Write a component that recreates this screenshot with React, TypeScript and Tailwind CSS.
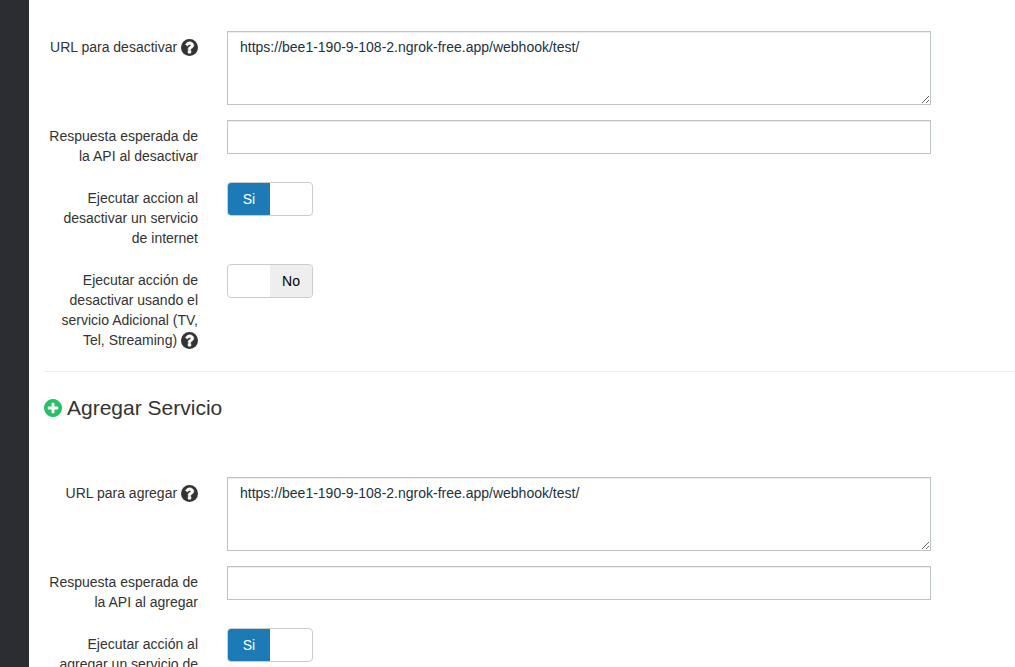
import { useState } from "react";
import type { ReactNode } from "react";

const HelpIcon = () => (
  <svg
    viewBox="128 128 1536 1536"
    className="inline-block size-[17px] align-[-4px]"
    aria-hidden="true"
  >
    <circle cx="896" cy="896" r="768" fill="currentColor" />
    <path
      fill="#fff"
      stroke="#fff"
      strokeWidth="50"
      strokeLinejoin="round"
      d="M1024 1376v-192q0-14-9-23t-23-9h-192q-14 0-23 9t-9 23v192q0 14 9 23t23 9h192q14 0 23-9t9-23zm256-672q0-88-55.5-163t-138.5-116-170-41q-243 0-371 213-15 24 8 42l132 100q7 6 19 6 16 0 25-12 53-68 86-92 34-24 86-24 48 0 85.5 26t37.5 59q0 38-20 61t-68 45q-63 28-115.5 86.5t-52.5 125.5v36q0 14 9 23t23 9h192q14 0 23-9t9-23q0-19 21.5-49.5t54.5-49.5q32-18 49-28.5t46-35 44.5-48 28-60.5 12.5-81z"
    />
  </svg>
);

const PlusIcon = () => (
  <svg
    viewBox="128 128 1536 1536"
    className="size-[18px] shrink-0 fill-[#26c165]"
    aria-hidden="true"
  >
    <path d="M1344 960v-128q0-26-19-45t-45-19h-256v-256q0-26-19-45t-45-19h-128q-26 0-45 19t-19 45v256h-256q-26 0-45 19t-19 45v128q0 26 19 45t45 19h256v256q0 26 19 45t45 19h128q26 0 45-19t19-45v-256h256q26 0 45-19t19-45zm320-64q0 209-103 385.5t-279.5 279.5-385.5 103-385.5-103-279.5-279.5-103-385.5 103-385.5 279.5-279.5 385.5-103 385.5 103 279.5 279.5 103 385.5z" />
  </svg>
);

interface FormRowProps {
  id: string;
  label: string;
  help?: boolean;
  children: ReactNode;
}

const FormRow = ({ id, label, help, children }: FormRowProps) => (
  <div className="flex items-start">
    <label htmlFor={id} className="w-[184px] shrink-0 px-[15px] pt-1.5 pb-px text-right">
      {label}
      {help && (
        <>
          {" "}
          <HelpIcon />
        </>
      )}
    </label>
    <div className="flex min-w-0 flex-1 pl-3.5 pr-[84px]">{children}</div>
  </div>
);

const UrlField = ({ id, value }: { id: string; value: string }) => (
  <textarea
    id={id}
    defaultValue={value}
    rows={3}
    className="h-[74px] w-full resize border border-[#bdc4c4] bg-white px-3 py-[5px] text-[#22313f] shadow-[inset_0_1px_1px_#00000013] outline-none"
  />
);

const TextField = ({ id }: { id: string }) => (
  <input
    id={id}
    type="text"
    className="h-[34px] w-full border border-[#bdc4c4] bg-white px-3 py-[5px] text-[#22313f] shadow-[inset_0_1px_1px_#00000013] outline-none"
  />
);

const Toggle = ({ id, initial }: { id: string; initial: boolean }) => {
  const [on, setOn] = useState<boolean>(initial);

  return (
    <label className="flex h-[34px] w-[86px] cursor-pointer overflow-hidden rounded border border-[#ccc] bg-white text-center leading-8">
      <input
        id={id}
        type="checkbox"
        checked={on}
        onChange={(e) => setOn(e.target.checked)}
        className="sr-only"
      />
      <span className={on ? "flex-1 bg-[#1c7ab6] text-white" : "flex-1"}>{on ? "Si" : ""}</span>
      <span className={on ? "flex-1" : "flex-1 bg-[#eee] text-black"}>{on ? "" : "No"}</span>
    </label>
  );
};

const WEBHOOK_URL = "https://bee1-190-9-108-2.ngrok-free.app/webhook/test/";

export default function App() {
  return (
    <div className="flex h-screen overflow-hidden bg-white font-['Liberation_Sans',Arial,sans-serif] text-[14px] leading-5 text-[#333]">
      <aside className="w-[29px] shrink-0 bg-[#2c2d32]" />
      <main className="min-w-0 flex-1 overflow-x-hidden overflow-y-auto pt-[31px] [scrollbar-width:none]">
        <section className="flex flex-col gap-[15px]">
          <FormRow id="url-desactivar" label="URL para desactivar" help>
            <UrlField id="url-desactivar" value={WEBHOOK_URL} />
          </FormRow>
          <FormRow id="respuesta-desactivar" label="Respuesta esperada de la API al desactivar">
            <TextField id="respuesta-desactivar" />
          </FormRow>
          <FormRow id="accion-desactivar" label="Ejecutar accion al desactivar un servicio de internet">
            <Toggle id="accion-desactivar" initial={true} />
          </FormRow>
          <FormRow
            id="accion-adicional"
            label="Ejecutar acción de desactivar usando el servicio Adicional (TV, Tel, Streaming)"
            help
          >
            <Toggle id="accion-adicional" initial={false} />
          </FormRow>
        </section>

        <hr className="my-5 ml-[15px] border-[#eee]" />

        <h2 className="mb-[57px] ml-[15px] flex items-center gap-[5px] pt-1 text-[21px] leading-6">
          <PlusIcon />
          Agregar Servicio
        </h2>

        <section className="flex flex-col gap-[15px]">
          <FormRow id="url-agregar" label="URL para agregar" help>
            <UrlField id="url-agregar" value={WEBHOOK_URL} />
          </FormRow>
          <FormRow id="respuesta-agregar" label="Respuesta esperada de la API al agregar">
            <TextField id="respuesta-agregar" />
          </FormRow>
          <FormRow id="accion-agregar" label="Ejecutar acción al agregar un servicio de internet">
            <Toggle id="accion-agregar" initial={true} />
          </FormRow>
        </section>
      </main>
    </div>
  );
}
